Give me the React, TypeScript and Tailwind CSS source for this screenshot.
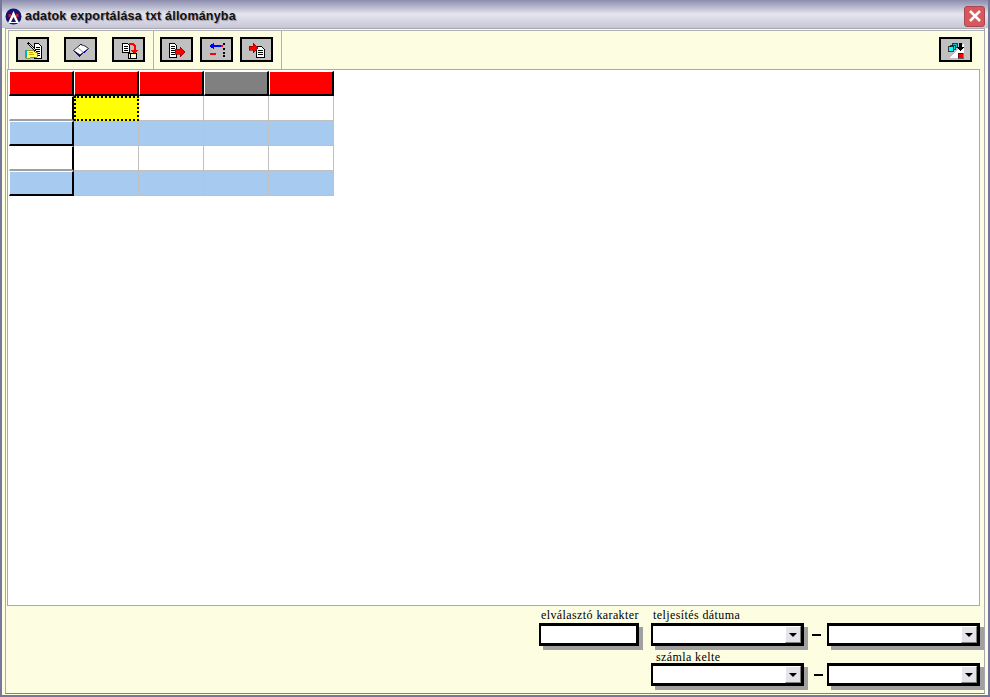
import React from "react";

const Btn = ({ children }: { children: React.ReactNode }) => (
  <div className="w-[33px] h-[25px] border-2 border-black bg-[#c0c0c0] flex items-center justify-center">{children}</div>
);

const S = ({ children }: { children: React.ReactNode }) => (
  <svg width="24" height="20" viewBox="0 0 24 20" shapeRendering="crispEdges">{children}</svg>
);

const Lines = ({ x, y, w, n }: { x: number; y: number; w: number; n: number }) => (
  <g>
    {Array.from({ length: n }).map((_, i) => (
      <rect key={i} x={x} y={y + i * 2} width={w} height="1" fill="#000" />
    ))}
  </g>
);

const I1 = () => (
  <S>
    <path d="M13.500 3.500h4l3 3v12h-7z" fill="#fff" stroke="#000" />
    <Lines x={15} y={7} w={4} n={5} />
    <path d="M7 3l8 8" stroke="#000" strokeWidth="2.500" />
    <path d="M8 4l6 6" stroke="#ffff00" />
    <path d="M5 10h6l3 2h2v5H9v1H5z" fill="#ffff66" stroke="#808000" strokeWidth=".8" />
    <rect x="4" y="10" width="2" height="8" fill="#00b4b4" />
    <rect x="8" y="12" width="4" height="1" fill="#c8a000" />
    <rect x="8" y="14" width="5" height="1" fill="#c8a000" />
  </S>
);
const I2 = () => (
  <S>
    <path d="M4 11L12 4l8 5-10 8z" fill="#0000d0" />
    <path d="M4.500 10.500L11.500 4.500l3 1 1.500 .5 3.500 2.500-8.500 6.500z" fill="#fff" stroke="#000" strokeWidth=".8" shapeRendering="auto" />
    <path d="M8 7l6 5" stroke="#808080" strokeWidth=".8" shapeRendering="auto" />
  </S>
);
const I3 = () => (
  <S>
    <path d="M5.500 3.500h5l2 2v7h-7z" fill="#fff" stroke="#000" />
    <Lines x={7} y={6} w={4} n={3} />
    <path d="M12 4h4l2 2v5" fill="none" stroke="#ff0000" strokeWidth="2" />
    <path d="M14 10h7l-3.500 4z" fill="#ff0000" />
    <rect x="11.500" y="13.500" width="8" height="5" fill="#ffff99" stroke="#000" />
    <rect x="13" y="14" width="1" height="4" fill="#000" />
    <rect x="15" y="15" width="3" height="3" fill="#fff" />
  </S>
);
const I4 = () => (
  <S>
    <path d="M4.500 3.500h5l2 2v12h-7z" fill="#fff" stroke="#000" />
    <Lines x={6} y={6} w={4} n={5} />
    <path d="M10 9h5V7l5 5-5 5v-3h-5z" fill="#ff0000" stroke="#800000" strokeWidth=".6" />
  </S>
);
const I5 = () => (
  <S>
    <rect x="8" y="5" width="8" height="2" fill="#0000ff" />
    <path d="M9 3v6L4 6z" fill="#0000ff" />
    <rect x="5" y="13" width="6" height="2" fill="#ff0000" />
    <rect x="16" y="5" width="2" height="2" fill="#ff0000" />
    <rect x="18" y="3" width="2" height="2" fill="#000" />
    <rect x="18" y="8" width="2" height="2" fill="#000" />
    <rect x="18" y="12" width="2" height="2" fill="#000" />
    <rect x="18" y="15" width="2" height="2" fill="#000" />
  </S>
);
const I6 = () => (
  <S>
    <path d="M11.500 6.500h5l3 3v8h-8z" fill="#fff" stroke="#000" />
    <Lines x={13} y={10} w={5} n={3} />
    <path d="M4 6h4V3l5 5-5 5v-3H4z" fill="#ff0000" stroke="#800000" strokeWidth=".6" />
  </S>
);
const I7 = () => (
  <S>
    <path d="M5 18L20 3v15z" fill="#fff" />
    <rect x="8.500" y="3.500" width="5" height="4" fill="#00c8c8" stroke="#000" strokeWidth=".7" />
    <rect x="6.500" y="5.500" width="5" height="4" fill="#00e8e8" stroke="#000" strokeWidth=".7" />
    <rect x="4.500" y="6.500" width="5" height="5" fill="#00ffff" stroke="#000" strokeWidth=".7" />
    <path d="M15 3h3v4h2l-3.500 4L13 7h2z" fill="#000" />
    <rect x="14" y="13" width="5" height="5" fill="#ff0000" stroke="#000" strokeWidth=".5" />
  </S>
);

const Field = ({ w, arrow = true }: { w: string; arrow?: boolean }) => (
  <div className={w + " h-[23px] border-[3px] border-l-2 border-black bg-white flex justify-end shadow-[4px_4px_0_#a0a0a0]"}>
    {arrow && (
      <div className="w-[16px] h-[17px] bg-[#e4e4ea] border-t border-l border-white border-b-[#808080] border-r-[#808080] border-r border-b flex items-center justify-center">
        <div className="w-0 h-0 border-l-[4px] border-r-[4px] border-t-[4px] border-l-transparent border-r-transparent border-t-black" />
      </div>
    )}
  </div>
);

const headers = ["bg-[#ff0000]", "bg-[#ff0000]", "bg-[#ff0000]", "bg-[#808080]", "bg-[#ff0000]"];

const label = "text-[12px] leading-[14px] tracking-[0.4px] text-black";

export default function App() {
  const rows = [0, 1, 2, 3];
  return (
    <div className="w-[990px] h-[697px] flex flex-col bg-[#fdfde2] border-[2px] border-t-0 border-[#77779c] overflow-hidden" style={{ fontFamily: '"Liberation Serif", serif' }}>
      <div className="h-[28px] shrink-0 -mx-[2px] flex items-center pt-[4px] pl-[5px] pr-[5px] bg-gradient-to-b from-[#8c8cae] via-[#e6e6ee] to-[#c6c6d8]">
        <svg width="17" height="17" viewBox="0 0 17 17" className="mr-[3px]">
          <circle cx="8.500" cy="8.500" r="8" fill="#14146e" />
          <path d="M8.500 3L14 15H3z" fill="#fff" />
          <path d="M3.500 6h2.500v3H3.500zM11 6h2.500v3H11z" fill="#c02030" />
          <path d="M8.500 9L11 14H6z" fill="#14146e" />
        </svg>
        <span className="text-[12.500px] font-bold text-[#111] tracking-[0.2px]" style={{ fontFamily: '"Liberation Sans", sans-serif', textShadow: "1px 1px 1px #9090a0" }}>
          adatok exportálása txt állományba
        </span>
        <div className="ml-auto w-[21px] h-[21px] rounded-[3px] bg-[#d8575a] border border-[#a84850] flex items-center justify-center">
          <svg width="14" height="14" viewBox="0 0 14 14"><path d="M2 2l10 10M12 2L2 12" stroke="#fff" strokeWidth="2.600" /></svg>
        </div>
      </div>
      <div className="flex-1 flex flex-col border border-[#a8a8b4] mx-[3px] mb-[1px] min-h-0 border-b-[#808080]">
        <div className="h-[39px] shrink-0 flex items-stretch border-t border-[#b0b0b0] mt-[1px] ml-[2px]">
          <div className="flex items-start pt-[6px] gap-[15px] pl-[7px] w-[145px] border-l border-[#b0b0b0]">
            <Btn><I1 /></Btn><Btn><I2 /></Btn><Btn><I3 /></Btn>
          </div>
          <div className="flex items-start pt-[6px] gap-[7px] pl-[6px] w-[129px] border-l border-r border-[#b0b0b0]">
            <Btn><I4 /></Btn><Btn><I5 /></Btn><Btn><I6 /></Btn>
          </div>
          <div className="flex-1 flex items-start pt-[6px] justify-end pr-[12px]">
            <Btn><I7 /></Btn>
          </div>
        </div>
        <div className="flex-1 bg-white border border-[#a8a8b4] ml-[1px] mr-[4px] pl-[1px] pt-[1px] min-h-0">
          <div className="grid grid-cols-[65px_65px_65px_65px_65px] w-[325px]">
            {headers.map((c, i) => (
              <div key={i} className={c + " h-[25px] border-r-2 border-b-2 border-black border-l-white border-t-white border-t border-l"} />
            ))}
            {rows.map((r) => (
              <React.Fragment key={r}>
                <div className={(r % 2 ? "bg-[#a6caf0] border-b-black" : "bg-white border-b-[#a0a0a0]") + " h-[25px] border-l border-t border-l-white border-t-white border-r-2 border-r-black border-b-2"} />
                {[0, 1, 2, 3].map((c) =>
                  r === 0 && c === 0 ? (
                    <div key={c} className="h-[25px] bg-[#ffff00] border-2 border-dotted border-black" />
                  ) : (
                    <div key={c} className={(r % 2 ? "bg-[#a6caf0]" : "bg-white") + " h-[25px] border-r border-b border-[#c0c0c0]"} />
                  )
                )}
              </React.Fragment>
            ))}
          </div>
        </div>
        <div className="h-[87px] shrink-0 flex justify-end pr-[4px] pt-[2px]">
          <div className="flex flex-col w-[112px]">
            <div className={label + " h-[15px] pl-[2px]"}>elválasztó karakter</div>
            <Field w="w-[100px]" arrow={false} />
          </div>
          <div className="flex flex-col w-[329px]">
            <div className={label + " h-[15px] pl-[2px]"}>teljesítés dátuma</div>
            <div className="flex items-center">
              <Field w="w-[153px]" />
              <div className="w-[9px] h-[2px] bg-black ml-[8px] mr-[6px]" />
              <Field w="w-[153px]" />
            </div>
            <div className={label + " h-[13px] pl-[5px] mt-[4px]"}>számla kelte</div>
            <div className="flex items-center">
              <Field w="w-[153px]" />
              <div className="w-[9px] h-[2px] bg-black ml-[10px] mr-[4px]" />
              <Field w="w-[153px]" />
            </div>
          </div>
        </div>
      </div>
    </div>
  );
}
